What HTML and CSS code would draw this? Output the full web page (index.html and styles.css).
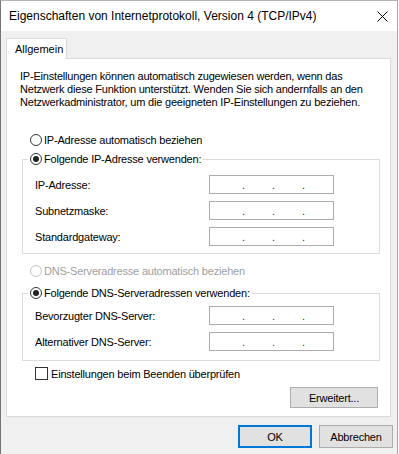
FILE: index.html
```html
<!DOCTYPE html>
<html lang="de">
<head>
  <meta charset="UTF-8">
  <title>Eigenschaften von Internetprotokoll, Version 4 (TCP/IPv4)</title>
  <link rel="stylesheet" href="styles.css">
</head>
<body>
  <div class="window">
    <div class="titlebar">
      <span class="title">Eigenschaften von Internetprotokoll, Version 4 (TCP/IPv4)</span>
      <svg class="close" width="11" height="11" viewBox="0 0 11 11">
        <path d="M0.5 0.5 L10.5 10.5 M10.5 0.5 L0.5 10.5" stroke="#000" stroke-width="1" fill="none"/>
      </svg>
    </div>

    <div class="client">
      <div class="tab">Allgemein</div>

      <div class="panel">
        <p class="intro">
          IP-Einstellungen können automatisch zugewiesen werden, wenn das<br>
          Netzwerk diese Funktion unterstützt. Wenden Sie sich andernfalls an den<br>
          Netzwerkadministrator, um die geeigneten IP-Einstellungen zu beziehen.
        </p>

        <div class="radio radio-first"><span class="mark"></span>IP-Adresse automatisch beziehen</div>

        <fieldset class="group group-ip">
          <legend><span class="radio checked"><span class="mark"></span>Folgende IP-Adresse verwenden:</span></legend>
          <div class="fields">
            <div class="row"><span class="label">IP-Adresse:</span><span class="ip"><span>.</span><span>.</span><span>.</span></span></div>
            <div class="row"><span class="label">Subnetzmaske:</span><span class="ip"><span>.</span><span>.</span><span>.</span></span></div>
            <div class="row"><span class="label">Standardgateway:</span><span class="ip"><span>.</span><span>.</span><span>.</span></span></div>
          </div>
        </fieldset>

        <div class="radio radio-dns disabled"><span class="mark"></span>DNS-Serveradresse automatisch beziehen</div>

        <fieldset class="group group-dns">
          <legend><span class="radio checked"><span class="mark"></span>Folgende DNS-Serveradressen verwenden:</span></legend>
          <div class="fields">
            <div class="row"><span class="label">Bevorzugter DNS-Server:</span><span class="ip"><span>.</span><span>.</span><span>.</span></span></div>
            <div class="row"><span class="label">Alternativer DNS-Server:</span><span class="ip"><span>.</span><span>.</span><span>.</span></span></div>
          </div>
        </fieldset>

        <div class="check"><span class="box"></span>Einstellungen beim Beenden überprüfen</div>

        <div class="panel-actions">
          <button class="btn btn-wide">Erweitert...</button>
        </div>
      </div>

      <div class="actions">
        <button class="btn btn-default">OK</button>
        <button class="btn">Abbrechen</button>
      </div>
    </div>
  </div>
</body>
</html>
```

FILE: styles.css
```css
* {
  box-sizing: border-box;
}
body {
  margin: 0;
  background: #fff;
  font-family: "Liberation Sans", Arial, sans-serif;
  font-size: 11px;
  letter-spacing: -0.2px;
  color: #000;
}
.window {
  width: 398px;
  height: 454px;
  border-left: 1px solid #747474;
  border-right: 1px solid #a8a8a8;
  border-top: 1px solid #b4b4b4;
  display: flex;
  flex-direction: column;
}
.titlebar {
  height: 30px;
  background: #fff;
  display: flex;
  align-items: center;
  justify-content: space-between;
  padding-left: 8px;
}
.title {
  font-size: 12px;
  letter-spacing: 0;
}
.close {
  margin-right: 9px;
}
.client {
  flex: 1;
  background: #f0f0f0;
  padding: 7px 4px 0 5px;
}
.tab {
  position: relative;
  z-index: 1;
  width: 61px;
  height: 21px;
  margin-bottom: -1px;
  padding-left: 8px;
  line-height: 20px;
  letter-spacing: 0;
  background: #fff;
  border: 1px solid #d9d9d9;
  border-bottom: none;
}
.panel {
  width: 385px;
  height: 359px;
  padding: 11px 10px 0 13px;
  background: #fff;
  border: 1px solid #d9d9d9;
}
.intro {
  margin: 0;
  line-height: 13px;
}
.radio {
  display: flex;
  align-items: center;
  gap: 2px;
  height: 14px;
}
.radio .mark {
  width: 12px;
  height: 12px;
  border: 1px solid #333;
  border-radius: 50%;
  background: #fff;
  display: flex;
  align-items: center;
  justify-content: center;
}
.radio.checked .mark::after {
  content: "";
  width: 6px;
  height: 6px;
  border-radius: 50%;
  background: #222;
}
.radio.disabled {
  color: #a0a0a0;
}
.radio.disabled .mark {
  border-color: #c4c4c4;
}
.radio-first {
  margin: 24px 0 0 10px;
}
.radio-dns {
  margin: 10px 0 0 10px;
}
.group {
  width: 358px;
  min-width: 0;
  margin: 0 0 0 2px;
  border: 1px solid #dcdcdc;
}
.group legend {
  padding: 0 2px;
}
.group-ip {
  margin-top: 5px;
  padding: 9px 0 7px 5px;
}
.group-dns {
  margin-top: 8px;
  padding: 6px 0 9px 5px;
}
.fields {
  display: flex;
  flex-direction: column;
  gap: 7px;
  padding-left: 7px;
}
.row {
  display: flex;
  align-items: center;
  height: 19px;
}
.label {
  width: 174px;
}
.ip {
  display: flex;
  width: 125px;
  height: 19px;
  padding: 3px 0 0 32px;
  border: 1px solid #ababab;
  color: #333;
}
.ip span {
  width: 30px;
}
.check {
  display: flex;
  align-items: center;
  gap: 3px;
  height: 13px;
  margin: 6px 0 0 15px;
}
.check .box {
  width: 13px;
  height: 13px;
  border: 1px solid #333;
  background: #fff;
}
.panel-actions {
  display: flex;
  justify-content: flex-end;
  margin-top: 7px;
  padding-right: 2px;
}
.btn {
  height: 23px;
  width: 74px;
  padding: 0;
  font-family: inherit;
  font-size: 11px;
  letter-spacing: inherit;
  color: #000;
  background: #e1e1e1;
  border: 1px solid #adadad;
}
.btn-wide {
  width: 88px;
  height: 21px;
}
.btn-default {
  border-color: #0078d7;
  box-shadow: inset 0 0 0 1px #0078d7;
}
.actions {
  display: flex;
  justify-content: flex-end;
  gap: 7px;
  margin-top: 8px;
}
```
